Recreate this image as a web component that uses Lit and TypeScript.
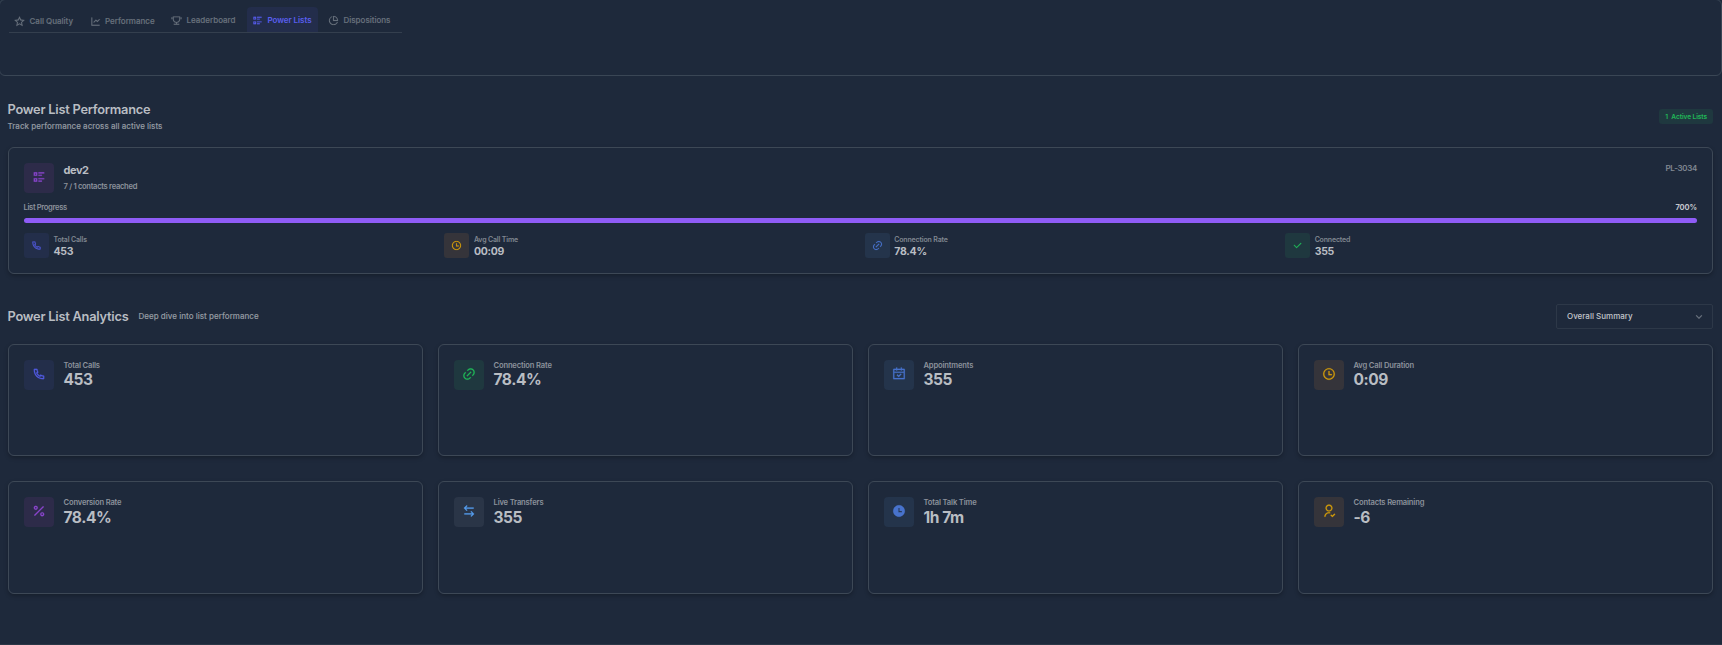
import { LitElement, html, css, svg } from "lit";
import { customElement, property } from "lit/decorators.js";

const ICONS: Record<string, string> = {
  star: "M12.0006 18.26L4.94715 22.2082L6.52248 14.2799L0.587891 8.7918L8.61493 7.84006L12.0006 0.5L15.3862 7.84006L23.4132 8.7918L17.4787 14.2799L19.054 22.2082L12.0006 18.26ZM12.0006 15.968L16.2473 18.3451L15.2988 13.5717L18.8719 10.2674L14.039 9.69434L12.0006 5.27502L9.96214 9.69434L5.12921 10.2674L8.70231 13.5717L7.75383 18.3451L12.0006 15.968Z",
  chart: "M5 3V19H21V21H3V3H5ZM20.2929 6.29289L21.7071 7.70711L16 13.4142L13 10.415L8.70711 14.7071L7.29289 13.2929L13 7.58579L16 10.585L20.2929 6.29289Z",
  trophy: "M13.0049 16.9409V19.0027H18.0049V21.0027H6.00488V19.0027H11.0049V16.9409C7.05857 16.4488 4.00488 13.0824 4.00488 9.00275V3.00275H20.0049V9.00275C20.0049 13.0824 16.9512 16.4488 13.0049 16.9409ZM6.00488 5.00275V9.00275C6.00488 12.3165 8.69117 15.0027 12.0049 15.0027C15.3186 15.0027 18.0049 12.3165 18.0049 9.00275V5.00275H6.00488ZM1.00488 5.00275H3.00488V9.00275H1.00488V5.00275ZM21.0049 5.00275H23.0049V9.00275H21.0049V5.00275Z",
  list: "M11 4H21V6H11V4ZM11 8H17V10H11V8ZM11 14H21V16H11V14ZM11 18H17V20H11V18ZM3 4H9V10H3V4ZM5 6V8H7V6H5ZM3 14H9V20H3V14ZM5 16V18H7V16H5Z",
  pie: "M9 2.4578V4.58152C6.06817 5.76829 4 8.64262 4 12C4 16.4183 7.58172 20 12 20C15.3574 20 18.2317 17.9318 19.4185 15H21.5422C20.2679 19.0571 16.4776 22 12 22C6.47715 22 2 17.5228 2 12C2 7.52236 4.94289 3.73207 9 2.4578ZM12 2C17.5228 2 22 6.47715 22 12C22 12.3375 21.9833 12.6711 21.9506 13H11V2.04938C11.3289 2.01672 11.6625 2 12 2ZM13 4.06189V11H19.9381C19.4869 7.38128 16.6187 4.51314 13 4.06189Z",
  phone: "M9.36556 10.6821C10.302 12.3288 11.6712 13.698 13.3179 14.6344L14.2024 13.3961C14.4965 12.9845 15.0516 12.8573 15.4956 13.0998C16.9024 13.8683 18.4571 14.3353 20.0789 14.4637C20.599 14.5049 21 14.9389 21 15.4606V19.9234C21 20.4361 20.6122 20.8657 20.1022 20.9181C19.5723 20.9726 19.0377 21 18.5 21C9.93959 21 3 14.0604 3 5.5C3 4.96227 3.02742 4.42771 3.08189 3.89776C3.1343 3.38775 3.56394 3 4.07665 3H8.53942C9.0611 3 9.49513 3.40104 9.5363 3.92109C9.66467 5.54288 10.1317 7.09764 10.9002 8.50444C11.1427 8.9484 11.0155 9.50354 10.6039 9.79757L9.36556 10.6821ZM6.84425 10.0252L8.7442 8.66809C8.20547 7.50514 7.83628 6.27183 7.64727 5H5.00907C5.00303 5.16632 5 5.333 5 5.5C5 12.9558 11.0442 19 18.5 19C18.667 19 18.8337 18.997 19 18.9909V16.3527C17.7282 16.1637 16.4949 15.7945 15.3319 15.2558L13.9748 17.1558C13.4258 16.9425 12.8956 16.6915 12.3874 16.4061L12.3293 16.373C10.3697 15.2587 8.74134 13.6303 7.627 11.6707L7.59394 11.6126C7.30849 11.1044 7.05754 10.5742 6.84425 10.0252Z",
  time: "M12 22C6.47715 22 2 17.5228 2 12C2 6.47715 6.47715 2 12 2C17.5228 2 22 6.47715 22 12C22 17.5228 17.5228 22 12 22ZM12 20C16.4183 20 20 16.4183 20 12C20 7.58172 16.4183 4 12 4C7.58172 4 4 7.58172 4 12C4 16.4183 7.58172 20 12 20ZM13 12H17V14H11V7H13V12Z",
  timeFill: "M12 22C6.47715 22 2 17.5228 2 12C2 6.47715 6.47715 2 12 2C17.5228 2 22 6.47715 22 12C22 17.5228 17.5228 22 12 22ZM13 12V7H11V14H17V12H13Z",
  link: "M18.3638 15.5355L16.9496 14.1213L18.3638 12.7071C20.3164 10.7545 20.3164 7.58866 18.3638 5.63604C16.4112 3.68341 13.2453 3.68341 11.2927 5.63604L9.87849 7.05025L8.46428 5.63604L9.87849 4.22182C12.6122 1.48815 17.0443 1.48815 19.778 4.22182C22.5117 6.95549 22.5117 11.3876 19.778 14.1213L18.3638 15.5355ZM15.5353 18.364L14.1211 19.7782C11.3875 22.5118 6.95531 22.5118 4.22164 19.7782C1.48797 17.0445 1.48797 12.6123 4.22164 9.87868L5.63585 8.46446L7.05007 9.87868L5.63585 11.2929C3.68323 13.2455 3.68323 16.4113 5.63585 18.364C7.58847 20.3166 10.7543 20.3166 12.7069 18.364L14.1211 16.9497L15.5353 18.364ZM14.8282 7.75736L16.2425 9.17157L9.17139 16.2426L7.75717 14.8284L14.8282 7.75736Z",
  check: "M9.9997 15.1709L19.1921 5.97852L20.6063 7.39273L9.9997 17.9993L3.63574 11.6354L5.04996 10.2212L9.9997 15.1709Z",
  calendar: "M9 1V3H15V1H17V3H21C21.5523 3 22 3.44772 22 4V20C22 20.5523 21.5523 21 21 21H3C2.44772 21 2 20.5523 2 20V4C2 3.44772 2.44772 3 3 3H7V1H9ZM20 10H4V19H20V10ZM15.0355 11.136L16.4497 12.5503L11.5 17.5L7.96447 13.9645L9.37868 12.5503L11.5 14.6716L15.0355 11.136ZM7 5H4V8H20V5H17V6H15V5H9V6H7V5Z",
  percent: "M17.5 21C15.567 21 14 19.433 14 17.5C14 15.567 15.567 14 17.5 14C19.433 14 21 15.567 21 17.5C21 19.433 19.433 21 17.5 21ZM17.5 19C18.3284 19 19 18.3284 19 17.5C19 16.6716 18.3284 16 17.5 16C16.6716 16 16 16.6716 16 17.5C16 18.3284 16.6716 19 17.5 19ZM6.5 10C4.567 10 3 8.433 3 6.5C3 4.567 4.567 3 6.5 3C8.433 3 10 4.567 10 6.5C10 8.433 8.433 10 6.5 10ZM6.5 8C7.32843 8 8 7.32843 8 6.5C8 5.67157 7.32843 5 6.5 5C5.67157 5 5 5.67157 5 6.5C5 7.32843 5.67157 8 6.5 8ZM19.0711 3.51472L20.4853 4.92893L4.92893 20.4853L3.51472 19.0711L19.0711 3.51472Z",
  transfer: "M16.0503 12.0498L21 16.9996L16.0503 21.9493L14.636 20.5351L17.172 17.9988L4 17.9996V15.9996L17.172 15.9988L14.636 13.464L16.0503 12.0498ZM7.94975 2.0498L9.36396 3.46402L6.828 5.9988L20 5.99959V7.99959L6.828 7.9988L9.36396 10.5351L7.94975 11.9493L3 6.99959L7.94975 2.0498Z",
  user: "M14 14.252V16.3414C13.3744 16.1203 12.7013 16 12 16C8.68629 16 6 18.6863 6 22H4C4 17.5817 7.58172 14 12 14C12.6906 14 13.3608 14.0875 14 14.252ZM12 13C8.685 13 6 10.315 6 7C6 3.685 8.685 1 12 1C15.315 1 18 3.685 18 7C18 10.315 15.315 13 12 13ZM12 11C14.21 11 16 9.21 16 7C16 4.79 14.21 3 12 3C9.79 3 8 4.79 8 7C8 9.21 9.79 11 12 11ZM17.7929 19.9142L21.3284 16.3787L22.7426 17.7929L17.7929 22.7426L14.2574 19.2071L15.6716 17.7929L17.7929 19.9142Z",
  down: "M11.9999 13.1714L16.9497 8.22168L18.3639 9.63589L11.9999 15.9999L5.63599 9.63589L7.0502 8.22168L11.9999 13.1714Z",
};

@customElement("ri-icon")
export class RiIcon extends LitElement {
  static styles = css`
    :host { display: block; width: 14px; height: 14px; flex: none; }
    .glyph { display: block; width: 100%; height: 100%; fill: currentColor; stroke: currentColor; stroke-width: 0.3; }
  `;
  @property() name = "star";
  render() {
    return html`<svg class="glyph" viewBox="0 0 24 24">${svg`<path fill-rule="evenodd" d=${ICONS[this.name]}></path>`}</svg>`;
  }
}

const TABS = [
  { icon: "star", label: "Call Quality", cls: "t1" },
  { icon: "chart", label: "Performance", cls: "t2" },
  { icon: "trophy", label: "Leaderboard", cls: "t3" },
  { icon: "list", label: "Power Lists", cls: "t4 active" },
  { icon: "pie", label: "Dispositions", cls: "t5" },
];

const METRICS = [
  { icon: "phone", tone: "indigo", label: "Total Calls", value: "453" },
  { icon: "time", tone: "amber", label: "Avg Call Time", value: "00:09" },
  { icon: "link", tone: "blue", label: "Connection Rate", value: "78.4%" },
  { icon: "check", tone: "green", label: "Connected", value: "355" },
];

const CARDS = [
  { icon: "phone", tone: "indigo", label: "Total Calls", value: "453" },
  { icon: "link", tone: "green", label: "Connection Rate", value: "78.4%" },
  { icon: "calendar", tone: "blue", label: "Appointments", value: "355" },
  { icon: "time", tone: "amber", label: "Avg Call Duration", value: "0:09" },
  { icon: "percent", tone: "purple", label: "Conversion Rate", value: "78.4%" },
  { icon: "transfer", tone: "sky", label: "Live Transfers", value: "355" },
  { icon: "timeFill", tone: "blue", label: "Total Talk Time", value: "1h 7m" },
  { icon: "user", tone: "amber", label: "Contacts Remaining", value: "-6" },
];

@customElement("app-root")
export class AppRoot extends LitElement {
  static styles = css`
    :host {
      display: block;
      box-sizing: border-box;
      height: 645px;
      overflow: hidden;
      background: #1e293b;
      border-bottom: 1px solid #2b3646;
      color: #b9bdc3;
      font-family: Inter, "Liberation Sans", sans-serif;
      font-size: 8px;
    }
    * { box-sizing: border-box; }
    .top { height: 77px; margin: -1px 0 0 -1px; padding: 7px 8px 0 9px; border: 1px solid #3a4655; border-radius: 6px; }
    .tabs { display: flex; width: 393px; height: 26px; border-bottom: 1px solid #343f4e; }
    .tab { display: flex; align-items: center; gap: 4.5px; height: 25px; color: #69727d; font-weight: 500; line-height: 12px; white-space: nowrap; border-radius: 4px 4px 0 0; -webkit-text-stroke: 0.15px currentColor; }
    .tab ri-icon { width: 11px; height: 11px; }
    .t1 { padding: 3px 0 0 5px; width: 75px; }
    .t2 { padding: 3px 0 0 5.5px; width: 81px; }
    .t3 { padding: 1px 0 0 6px; width: 82px; }
    .t4 { padding: 1px 0 0 5px; width: 71px; }
    .t5 { padding: 1px 0 0 10px; }
    .active { background: #232d4b; color: #5a5ff0; font-weight: 600; letter-spacing: -0.05px; -webkit-text-stroke: 0; }
    .head { display: flex; justify-content: space-between; padding: 0 9px 0 7.5px; }
    .title { margin: 0; font-size: 12.8px; line-height: 16px; font-weight: 600; letter-spacing: -0.23px; white-space: nowrap; }
    .sub { line-height: 12px; color: #949aa2; font-weight: 500; letter-spacing: 0.02px; white-space: nowrap; -webkit-text-stroke: 0.1px currentColor; }
    .first { height: 71px; padding-top: 26px; }
    .first .sub { margin-top: 2px; }
    .badge { display: flex; align-items: center; gap: 3.5px; height: 15px; margin-top: 7px; padding: 0 6px 0 6px; border-radius: 3px; background: #1f383f; color: #20b858; font-size: 6.6px; font-weight: 600; letter-spacing: -0.1px; }
    .card { border: 1px solid #3d4856; border-radius: 6px; box-shadow: 0 2px 4px rgba(0, 0, 0, 0.25); padding: 15px; }
    .power { height: 127px; margin: 0 9px 0 8px; }
    .row { display: flex; }
    .between { display: flex; justify-content: space-between; }
    .tile { display: flex; align-items: center; justify-content: center; width: 30px; height: 30px; padding-bottom: 3px; border-radius: 4px; flex: none; }
    .small { width: 25px; height: 25px; padding-bottom: 0; border-radius: 3px; }
    .small ri-icon { width: 11px; height: 11px; }
    .indigo { background: #232e4a; color: #5059dc; }
    .amber { background: #35343a; color: #d19b0c; }
    .blue { background: #24344b; color: #4873cc; }
    .green { background: #1f383f; color: #20b858; }
    .purple { background: #2d2b49; color: #8a45cc; }
    .sky { background: #2a3547; color: #559ceb; }
    .name { margin-top: 1px; font-size: 11px; line-height: 13px; font-weight: 700; letter-spacing: -0.45px; }
    .reach { margin-top: 5px; font-size: 7.6px; line-height: 10px; font-weight: 600; color: #8c929b; letter-spacing: -0.3px; }
    .texts { margin-left: 9.5px; white-space: nowrap; }
    .id { font-size: 8px; line-height: 10px; color: #858c95; font-weight: 500; letter-spacing: -0.25px; -webkit-text-stroke: 0.15px currentColor; }
    .progress { margin-top: 10px; height: 15px; line-height: 10px; font-size: 7.6px; font-weight: 600; color: #8c929b; letter-spacing: -0.35px; margin-left: -0.5px; }
    .pct { color: #c2c6cb; font-weight: 700; font-size: 7.5px; letter-spacing: -0.12px; }
    .track { height: 5px; border-radius: 3px; background: #8f5cf6; }
    .metrics { display: grid; grid-template-columns: repeat(4, 1fr); gap: 8.5px; margin-top: 10px; }
    .mt { margin-left: 4.5px; white-space: nowrap; }
    .ml { font-size: 7px; line-height: 9px; margin-top: 2px; font-weight: 600; color: #808790; letter-spacing: -0.16px; }
    .mv { font-size: 10.5px; line-height: 13px; margin-top: 1px; font-weight: 700; letter-spacing: -0.25px; }
    .second { height: 70px; padding-top: 30px; align-items: flex-start; }
    .pair { display: flex; align-items: center; gap: 10px; height: 24px; }
    .pair .title { padding-top: 1px; }
    .select { display: flex; align-items: center; justify-content: space-between; width: 157px; height: 25px; padding: 0 7.5px 0 10px; border: 1px solid #2d3848; border-radius: 2px; font-weight: 500; color: #c3c7cc; }
    .select span { padding-bottom: 1px; }
    .select ri-icon { width: 12px; height: 12px; color: #6c7581; }
    .grid { display: grid; grid-template-columns: repeat(4, 1fr); grid-template-rows: 112px 113px; gap: 25px 15px; padding: 0 9px 0 8px; }
    .cl { margin-top: 1px; font-size: 7.6px; line-height: 10px; font-weight: 600; color: #8c929b; letter-spacing: -0.16px; }
    .cv { font-size: 15.5px; line-height: 17px; font-weight: 700; letter-spacing: -0.42px; }
    .card:nth-child(n + 5) .cv { margin-top: 1px; }
  `;

  render() {
    return html`
      <header class="top">
        <nav class="tabs">
          ${TABS.map((t) => html`<div class="tab ${t.cls}"><ri-icon name=${t.icon}></ri-icon><span>${t.label}</span></div>`)}
        </nav>
      </header>
      <section class="head first">
        <div>
          <h2 class="title">Power List Performance</h2>
          <div class="sub">Track performance across all active lists</div>
        </div>
        <div class="badge"><span>1</span><span>Active Lists</span></div>
      </section>
      <section class="card power">
        <div class="between">
          <div class="row">
            <div class="tile purple"><ri-icon name="list"></ri-icon></div>
            <div class="texts"><div class="name">dev2</div><div class="reach">7 / 1 contacts reached</div></div>
          </div>
          <div class="id">PL-3034</div>
        </div>
        <div class="between progress"><span>List Progress</span><span class="pct">700%</span></div>
        <div class="track"></div>
        <div class="metrics">
          ${METRICS.map((m) => html`<div class="row">
            <div class="tile small ${m.tone}"><ri-icon name=${m.icon}></ri-icon></div>
            <div class="mt"><div class="ml">${m.label}</div><div class="mv">${m.value}</div></div>
          </div>`)}
        </div>
      </section>
      <section class="head second">
        <div class="pair"><h2 class="title">Power List Analytics</h2><span class="sub">Deep dive into list performance</span></div>
        <div class="select"><span>Overall Summary</span><ri-icon name="down"></ri-icon></div>
      </section>
      <section class="grid">
        ${CARDS.map((c) => html`<article class="card row">
          <div class="tile ${c.tone}"><ri-icon name=${c.icon}></ri-icon></div>
          <div class="texts"><div class="cl">${c.label}</div><div class="cv">${c.value}</div></div>
        </article>`)}
      </section>
    `;
  }
}
